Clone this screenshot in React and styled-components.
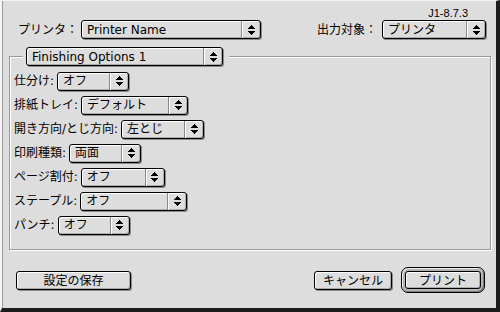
import React from "react";
import styled, { createGlobalStyle } from "styled-components";

const GlobalStyle = createGlobalStyle`
  html, body {
    margin: 0;
    padding: 0;
    background: #dddddd;
  }
  body {
    font-family: "DejaVu Sans", "Noto Sans CJK JP", sans-serif;
    font-size: 12px;
    color: #000;
  }
`;

const Window = styled.div`
  box-sizing: border-box;
  width: 500px;
  height: 312px;
  background: #dddddd;
  border-top: 1px solid #f4f4f4;
  border-left: 2px solid #f4f4f4;
  border-right: 4px solid #1c1c1c;
  border-bottom: 4px solid #1c1c1c;
  box-shadow: inset 1px 0 0 #9a9a9a;
  display: flex;
  flex-direction: column;
`;

const Header = styled.div`
  display: flex;
  flex-direction: column;
  padding: 6px 10px 0 16px;
`;

const Version = styled.div`
  align-self: flex-end;
  margin-right: 18px;
  font-family: "Liberation Sans", sans-serif;
  font-size: 11px;
  line-height: 12px;
`;

const TopRow = styled.div`
  display: flex;
  justify-content: space-between;
  align-items: center;
  margin-top: 1px;
`;

const Field = styled.div`
  display: flex;
  align-items: center;
  gap: ${(p) => p.$gap || 3}px;
`;

const Label = styled.span`
  white-space: nowrap;
  line-height: 14px;
`;

const PopupBox = styled.div`
  box-sizing: border-box;
  width: ${(p) => p.$w}px;
  height: 19px;
  display: flex;
  align-items: stretch;
  border: 1px solid #000;
  border-radius: 3px;
  background: #dddddd;
  box-shadow: 1px 1px 0 #8a8a8a, inset 1px 1px 0 #fff,
    inset -1px -1px 0 #acacac;
`;

const PopupText = styled.span`
  flex: 1;
  display: flex;
  align-items: center;
  padding-left: 5px;
  white-space: nowrap;
  overflow: hidden;
  line-height: 14px;
`;

const PopupArrow = styled.span`
  width: 18px;
  display: flex;
  align-items: center;
  justify-content: center;
  border-left: 1px solid #8a8a8a;
  box-shadow: inset 1px 0 0 #fff;
`;

const Group = styled.fieldset`
  margin: 8px 5px 0 7px;
  padding: 3px 0 12px 4px;
  border: 1px solid #9a9a9a;
  box-shadow: 1px 1px 0 #fff, inset 1px 1px 0 #fff;
  min-width: 0;
`;

const GroupTab = styled.legend`
  margin-left: 9px;
  padding: 0 6px 0 3px;
  background: #dddddd;
`;

const Row = styled.div`
  display: flex;
  align-items: center;
  height: 24px;
  gap: 3px;
`;

const Footer = styled.div`
  display: flex;
  align-items: center;
  margin-top: 17px;
  padding: 0 11px 0 14px;
`;

const Actions = styled.div`
  margin-left: auto;
  display: flex;
  align-items: center;
  gap: 9px;
`;

const Button = styled.button`
  box-sizing: border-box;
  width: ${(p) => p.$w}px;
  height: ${(p) => p.$h || 19}px;
  padding: 0;
  border: 1px solid #000;
  border-radius: 3px;
  background: #dddddd;
  box-shadow: ${(p) =>
    p.$inner
      ? "inset 1px 1px 0 #fff, inset -1px -1px 0 #acacac"
      : "1px 1px 0 #8a8a8a, inset 1px 1px 0 #fff, inset -1px -1px 0 #acacac"};
  font-family: "Noto Sans CJK JP", sans-serif;
  font-size: 12px;
  line-height: 14px;
  color: #000;
`;

const DefaultRing = styled.div`
  box-sizing: border-box;
  width: 84px;
  height: 26px;
  padding: 3px;
  border: 1px solid #000;
  border-radius: 7px;
  background: #b4b4b4;
  box-shadow: inset 1px 1px 0 #eeeeee, inset -1px -1px 0 #7a7a7a;
  display: flex;
`;

const Arrows = () => (
  <svg width="7" height="10" viewBox="0 0 7 10" shapeRendering="crispEdges">
    <path d="M3.5 0 L7 4 L0 4 Z M0 6 L7 6 L3.5 10 Z" fill="#000" />
  </svg>
);

const Popup = ({ w, children }) => (
  <PopupBox $w={w}>
    <PopupText>{children}</PopupText>
    <PopupArrow>
      <Arrows />
    </PopupArrow>
  </PopupBox>
);

const options = [
  { label: "仕分け:", value: "オフ", w: 72 },
  { label: "排紙トレイ:", value: "デフォルト", w: 107 },
  { label: "開き方向/とじ方向:", value: "左とじ", w: 83 },
  { label: "印刷種類:", value: "両面", w: 72 },
  { label: "ページ割付:", value: "オフ", w: 84 },
  { label: "ステープル:", value: "オフ", w: 107 },
  { label: "パンチ:", value: "オフ", w: 72 },
];

const App = () => (
  <>
    <GlobalStyle />
    <Window>
      <Header>
        <Version>J1-8.7.3</Version>
        <TopRow>
          <Field>
            <Label>プリンタ：</Label>
            <Popup w={180}>Printer Name</Popup>
          </Field>
          <Field $gap={5}>
            <Label>出力対象：</Label>
            <Popup w={104}>プリンタ</Popup>
          </Field>
        </TopRow>
      </Header>

      <Group>
        <GroupTab>
          <Popup w={197}>Finishing Options 1</Popup>
        </GroupTab>
        {options.map((o) => (
          <Row key={o.label}>
            <Label>{o.label}</Label>
            <Popup w={o.w}>{o.value}</Popup>
          </Row>
        ))}
      </Group>

      <Footer>
        <Button $w={115}>設定の保存</Button>
        <Actions>
          <Button $w={78}>キャンセル</Button>
          <DefaultRing>
            <Button $w={76} $h={18} $inner>
              プリント
            </Button>
          </DefaultRing>
        </Actions>
      </Footer>
    </Window>
  </>
);

export default App;
